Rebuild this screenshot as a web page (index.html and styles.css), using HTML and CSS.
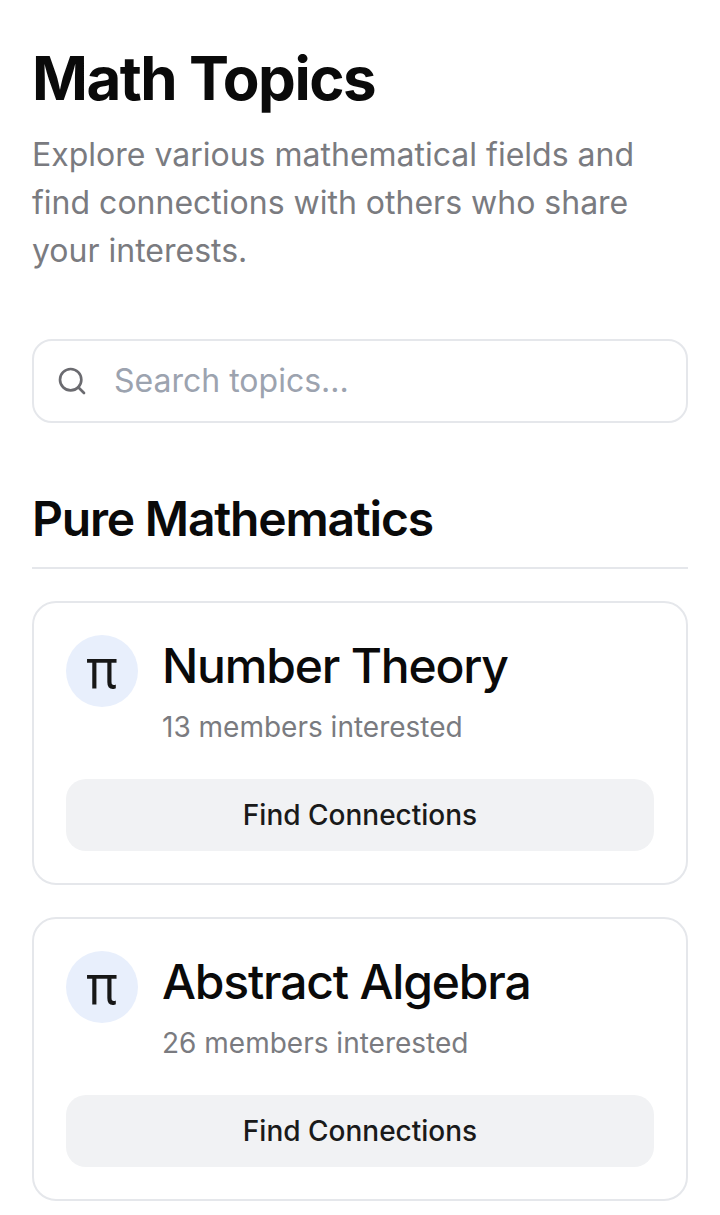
FILE: index.html
```html
<!DOCTYPE html>
<html lang="en">
<head>
  <meta charset="UTF-8">
  <title>Math Topics</title>
  <link rel="stylesheet" href="styles.css">
</head>
<body>
  <div class="page">
    <h1 class="title">Math Topics</h1>
    <p class="intro">Explore various mathematical fields and find connections with others who share your interests.</p>

    <div class="search">
      <svg class="searchIcon" viewBox="0 0 24 24" width="32" height="32" fill="none" stroke="#6b6b70" stroke-width="2" stroke-linecap="round" stroke-linejoin="round">
        <circle cx="11" cy="11" r="8"></circle>
        <path d="m21 21-4.3-4.3"></path>
      </svg>
      <span class="placeholder">Search topics...</span>
    </div>

    <h2 class="section">Pure Mathematics</h2>

    <div class="card">
      <div class="cardTop">
        <div class="badge"><span class="pi">π</span></div>
        <div>
          <h3 class="name">Number Theory</h3>
          <p class="members">13 members interested</p>
        </div>
      </div>
      <div class="btn">Find Connections</div>
    </div>

    <div class="card">
      <div class="cardTop">
        <div class="badge"><span class="pi">π</span></div>
        <div>
          <h3 class="name">Abstract Algebra</h3>
          <p class="members">26 members interested</p>
        </div>
      </div>
      <div class="btn">Find Connections</div>
    </div>
  </div>
</body>
</html>
```

FILE: styles.css
```css
* {
  margin: 0;
  padding: 0;
  box-sizing: border-box;
}

html, body {
  height: 100%;
  overflow: hidden;
}

body {
  background: #fff;
  color: #0a0a0a;
  font-family: Inter, "Liberation Sans", sans-serif;
}

.page {
  padding: 42px 32px 0;
}

.title {
  font-size: 60px;
  line-height: 72px;
  font-weight: 700;
  letter-spacing: -1.5px;
}

.intro {
  margin-top: 17px;
  font-size: 32px;
  line-height: 48px;
  color: #7a7b80;
}

.search {
  display: flex;
  align-items: center;
  height: 84px;
  margin-top: 64px;
  padding-left: 22px;
  border: 2px solid #e5e7eb;
  border-radius: 20px;
}

.searchIcon {
  flex-shrink: 0;
}

.placeholder {
  margin-left: 26px;
  margin-bottom: 2px;
  font-size: 32px;
  color: #9ca3af;
}

.section {
  margin-top: 65px;
  padding-bottom: 17px;
  border-bottom: 2px solid #e5e7eb;
  font-size: 48px;
  line-height: 62px;
  font-weight: 600;
  letter-spacing: -1.2px;
}

.card {
  margin-top: 32px;
  padding: 32px;
  border: 2px solid #e5e7eb;
  border-radius: 24px;
}

.cardTop {
  display: flex;
  gap: 24px;
}

.badge {
  display: flex;
  align-items: center;
  justify-content: center;
  flex-shrink: 0;
  width: 72px;
  height: 72px;
  border-radius: 50%;
  background: #e8effc;
  color: #171717;
  font-family: "Noto Sans", sans-serif;
  font-size: 48px;
  line-height: 1;
}

.pi {
  display: block;
  transform: translateY(-4px) scaleY(1.15);
}

.name {
  font-size: 48px;
  line-height: 62px;
  font-weight: 500;
  letter-spacing: -1.2px;
}

.members {
  margin-top: 10px;
  font-size: 28px;
  line-height: 40px;
  color: #7a7b80;
}

.btn {
  display: flex;
  align-items: center;
  justify-content: center;
  height: 72px;
  margin-top: 32px;
  border-radius: 20px;
  background: #f1f2f4;
  color: #1a1a1a;
  font-size: 28px;
  font-weight: 500;
}
```
